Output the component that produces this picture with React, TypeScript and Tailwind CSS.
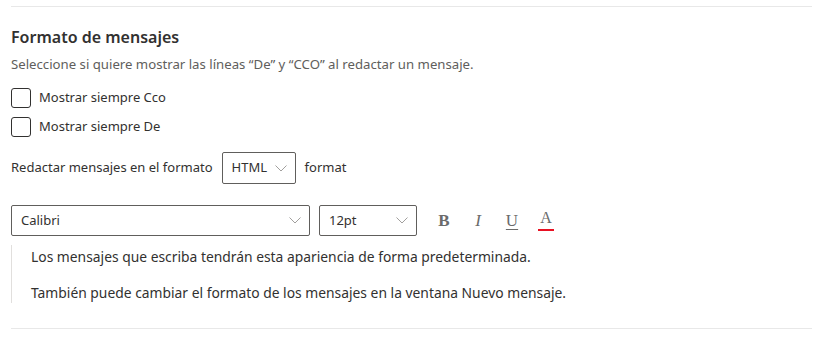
import React from 'react';

const Chevron: React.FC = () => (
  <svg width="12" height="7" viewBox="0 0 12 7" fill="none">
    <path d="M0.5 0.5 L6 6 L11.5 0.5" stroke="#a19f9d" strokeWidth="1" />
  </svg>
);

const Checkbox: React.FC<{ label: string }> = ({ label }) => (
  <label className="flex items-center h-[20px]">
    <span className="w-[20px] h-[20px] rounded-[3px] border border-[#323130] bg-white" />
    <span className="ml-[8px] text-[13px] text-[#323130]">{label}</span>
  </label>
);

const App: React.FC = () => {
  return (
    <div
      className="w-[824px] h-[343px] bg-white px-[11px] pt-[6px] pr-[12px] text-[#323130]"
      style={{ fontFamily: '"Noto Sans", "Open Sans", sans-serif' }}
    >
      <div className="border-t border-[#e8e8e8]" />

      <h2 className="mt-[19px] text-[16px] leading-[22px] font-semibold text-[#323130]">Formato de mensajes</h2>
      <p className="mt-[7px] text-[13.2px] leading-[18px] text-[#605e5c]">
        Seleccione si quiere mostrar las líneas “De” y “CCO” al redactar un mensaje.
      </p>

      <div className="mt-[15px] flex flex-col gap-[9px]">
        <Checkbox label="Mostrar siempre Cco" />
        <Checkbox label="Mostrar siempre De" />
      </div>

      <div className="mt-[15px] flex items-center h-[32px] text-[13px]">
        <span>Redactar mensajes en el formato</span>
        <button className="ml-[9px] h-[32px] w-[74px] flex items-center justify-between pl-[9px] pr-[8px] border border-[#605e5c] rounded-[2px]">
          <span>HTML</span>
          <Chevron />
        </button>
        <span className="ml-[9px]">format</span>
      </div>

      <div className="mt-[21px] flex items-center h-[31px] text-[13px]">
        <button className="h-[31px] w-[299px] flex items-center justify-between pl-[9px] pr-[8px] border border-[#605e5c] rounded-[2px]">
          <span>Calibri</span>
          <Chevron />
        </button>
        <button className="ml-[9px] h-[31px] w-[98px] flex items-center justify-between pl-[9px] pr-[8px] border border-[#605e5c] rounded-[2px]">
          <span>12pt</span>
          <Chevron />
        </button>
        <div className="ml-[11px] flex gap-[2px] text-[#6b6b6b]" style={{ fontFamily: '"Liberation Serif", serif' }}>
          <span className="w-[32px] h-[31px] flex items-center justify-center text-[17px] font-bold">B</span>
          <span className="w-[32px] h-[31px] flex items-center justify-center text-[17px] italic">I</span>
          <span className="w-[32px] h-[31px] flex items-center justify-center text-[17px] underline underline-offset-[3px]">U</span>
          <span className="w-[32px] h-[31px] flex flex-col items-center justify-center">
            <span className="text-[16px] leading-[16px]">A</span>
            <span className="mt-[3px] w-[16px] h-[2px] bg-[#e81123]" />
          </span>
        </div>
      </div>

      <div className="mt-[9px] border-l border-[#e1dfdd] h-[58px] pl-[19px] pt-[2px] text-[13.85px] leading-[20px] flex flex-col gap-[16px]">
        <p>Los mensajes que escriba tendrán esta apariencia de forma predeterminada.</p>
        <p>También puede cambiar el formato de los mensajes en la ventana Nuevo mensaje.</p>
      </div>

      <div className="mt-[25px] border-t border-[#e8e8e8]" />
    </div>
  );
};

export default App;
